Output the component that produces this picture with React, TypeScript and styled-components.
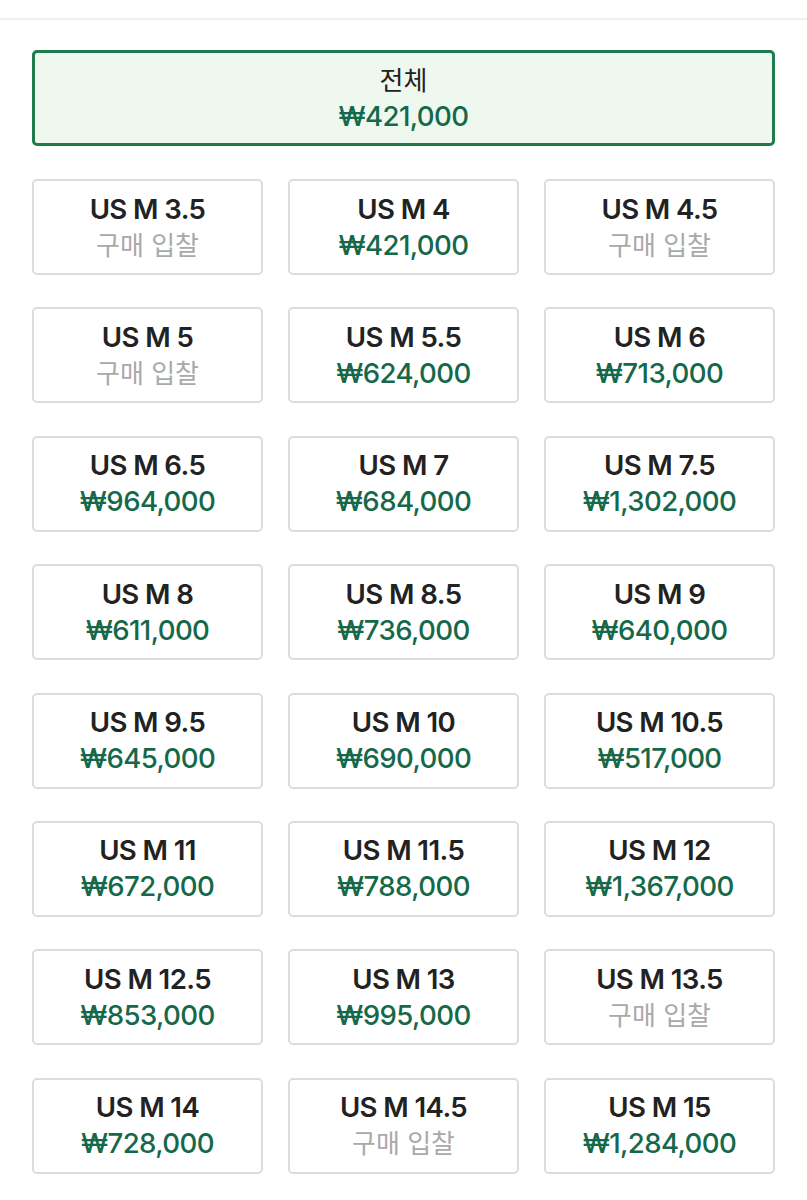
import React from "react";
import styled, { createGlobalStyle } from "styled-components";

const Global = createGlobalStyle`
  html, body { margin: 0; padding: 0; background: #ffffff; }
  body { font-family: Inter, "Noto Sans CJK KR", sans-serif; }
`;

const Page = styled.div`
  width: 807px;
  background: #fff;
`;

const TopBar = styled.div`
  height: 18px;
  border-bottom: 2px solid #efefef;
`;

const Content = styled.div`
  padding: 30px 32px 0 32px;
  display: flex;
  flex-direction: column;
  gap: 33px;
`;

const Card = styled.button<{ $active?: boolean }>`
  box-sizing: border-box;
  height: 96px;
  width: 100%;
  margin: 0;
  padding: 0;
  display: flex;
  flex-direction: column;
  align-items: center;
  justify-content: center;
  gap: 1px;
  border-radius: 5px;
  border: ${(p) => (p.$active ? "3px solid #1f7a4c" : "2px solid #dcdcdc")};
  background: ${(p) => (p.$active ? "#eef8ef" : "#ffffff")};
  font-family: Inter, "Noto Sans CJK KR", sans-serif;
  cursor: pointer;
`;

const Label = styled.div<{ $kr?: boolean }>`
  font-family: Inter, "Noto Sans CJK KR", sans-serif;
  font-size: ${(p) => (p.$kr ? "26px" : "27.6px")};
  line-height: 35px;
  font-weight: ${(p) => (p.$kr ? 400 : 600)};
  letter-spacing: ${(p) => (p.$kr ? "0" : "-0.6px")};
  color: #222222;
`;

const Price = styled.div<{ $bid?: boolean }>`
  font-family: Inter, "Noto Sans CJK KR", sans-serif;
  font-size: ${(p) => (p.$bid ? "26px" : "27.6px")};
  line-height: 35px;
  font-weight: ${(p) => (p.$bid ? 400 : 500)};
  letter-spacing: ${(p) => (p.$bid ? "0" : "-0.6px")};
  color: ${(p) => (p.$bid ? "#a9a9a9" : "#16684a")};
`;

const Grid = styled.div`
  display: grid;
  grid-template-columns: repeat(3, 1fr);
  column-gap: 25px;
  row-gap: 32.4px;
`;

const sizes: [string, string | null][] = [
  ["US M 3.5", null],
  ["US M 4", "₩421,000"],
  ["US M 4.5", null],
  ["US M 5", null],
  ["US M 5.5", "₩624,000"],
  ["US M 6", "₩713,000"],
  ["US M 6.5", "₩964,000"],
  ["US M 7", "₩684,000"],
  ["US M 7.5", "₩1,302,000"],
  ["US M 8", "₩611,000"],
  ["US M 8.5", "₩736,000"],
  ["US M 9", "₩640,000"],
  ["US M 9.5", "₩645,000"],
  ["US M 10", "₩690,000"],
  ["US M 10.5", "₩517,000"],
  ["US M 11", "₩672,000"],
  ["US M 11.5", "₩788,000"],
  ["US M 12", "₩1,367,000"],
  ["US M 12.5", "₩853,000"],
  ["US M 13", "₩995,000"],
  ["US M 13.5", null],
  ["US M 14", "₩728,000"],
  ["US M 14.5", null],
  ["US M 15", "₩1,284,000"],
];

export default function App() {
  return (
    <Page>
      <Global />
      <TopBar />
      <Content>
        <Card $active>
          <Label $kr>전체</Label>
          <Price>₩421,000</Price>
        </Card>
        <Grid>
          {sizes.map(([s, p]) => (
            <Card key={s}>
              <Label>{s}</Label>
              <Price $bid={!p}>{p ?? "구매 입찰"}</Price>
            </Card>
          ))}
        </Grid>
      </Content>
    </Page>
  );
}
